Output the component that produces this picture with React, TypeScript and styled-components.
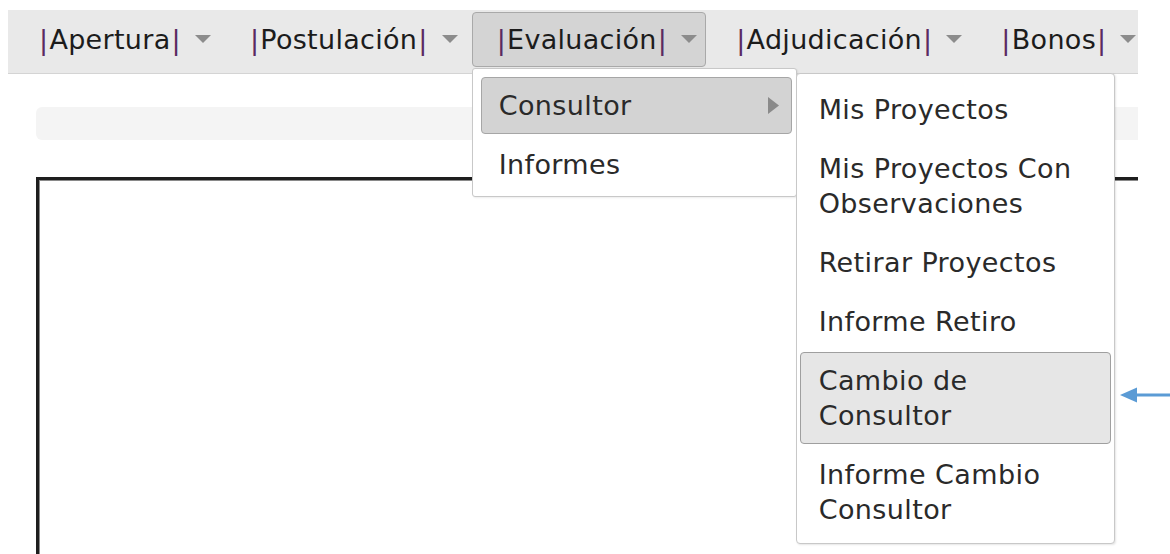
import React from "react";
import styled, { createGlobalStyle } from "styled-components";

const GlobalStyle = createGlobalStyle`
  html, body {
    margin: 0;
    padding: 0;
    background: #ffffff;
  }
  body {
    font-family: "DejaVu Sans", Verdana, "Liberation Sans", sans-serif;
  }
`;

const Page = styled.div`
  position: relative;
  width: 1170px;
  height: 554px;
  overflow: hidden;
  padding: 10px 0 0 8px;
  box-sizing: border-box;
`;

const Shell = styled.div`
  width: 1130px;
  display: flex;
  flex-direction: column;
`;

const MenuBar = styled.nav`
  display: flex;
  align-items: flex-start;
  gap: 5px;
  height: 61px;
  padding: 2px 0 0 6px;
  box-sizing: content-box;
  background: #e9e9e9;
  border-bottom: 1px solid #d4d4d4;
  position: relative;
  z-index: 2;
  overflow: visible;
`;

const Tab = styled.div<{ $open?: boolean }>`
  position: relative;
  display: flex;
  align-items: center;
  gap: 13px;
  height: 55px;
  box-sizing: border-box;
  padding: 0 8px 0 23px;
  border: 1px solid ${(p) => (p.$open ? "#a9a9a9" : "transparent")};
  border-radius: 4px;
  background: ${(p) => (p.$open ? "#d4d4d4" : "transparent")};
`;

const TabLabel = styled.span`
  font-size: 27px;
  line-height: 35px;
  letter-spacing: 0.3px;
  color: #1c1c1c;
  white-space: nowrap;
`;

const Pipe = styled.span`
  color: #5a2a62;
  padding: 0 1px;
`;

const Caret = styled.svg`
  display: block;
  width: 16px;
  height: 8px;
  margin-top: -2px;
  flex: none;
`;

const Dropdown = styled.ul`
  position: absolute;
  top: calc(100% + 2px);
  left: -1px;
  width: 325px;
  box-sizing: border-box;
  margin: 0;
  padding: 8px 4px 3px 8px;
  list-style: none;
  display: flex;
  flex-direction: column;
  gap: 2px;
  background: #ffffff;
  border: 1px solid #c8c8c8;
  border-radius: 3px;
  box-shadow: 1px 1px 2px rgba(0, 0, 0, 0.08);
`;

const Submenu = styled.ul`
  position: absolute;
  top: 4px;
  left: 100%;
  width: 319px;
  box-sizing: border-box;
  margin: 0;
  padding: 7px 3px 5px 3px;
  list-style: none;
  display: flex;
  flex-direction: column;
  gap: 2px;
  background: #ffffff;
  border: 1px solid #c8c8c8;
  border-radius: 4px;
  box-shadow: 1px 1px 2px rgba(0, 0, 0, 0.1);
`;

const Item = styled.li<{ $state?: "active" | "hover"; $indent?: number }>`
  display: flex;
  align-items: center;
  justify-content: space-between;
  padding: 10px 12px 10px ${(p) => p.$indent ?? 18}px;
  border: 1px solid
    ${(p) =>
      p.$state === "active" ? "#a6a6a6" : p.$state === "hover" ? "#9f9f9f" : "transparent"};
  border-radius: 4px;
  background: ${(p) =>
    p.$state === "active" ? "#d3d3d3" : p.$state === "hover" ? "#e6e6e6" : "transparent"};
  font-size: 27px;
  line-height: 35px;
  letter-spacing: 0.4px;
  color: #2a2a2a;
`;

const SubArrow = styled.svg`
  display: block;
  width: 11px;
  height: 17px;
  flex: none;
`;

const Content = styled.div`
  width: 1130px;
  overflow: hidden;
  padding-left: 28px;
  box-sizing: border-box;
`;

const Breadcrumb = styled.div`
  margin-top: 33px;
  width: 1140px;
  height: 33px;
  background: #f4f4f4;
  border-radius: 6px;
`;

const Panel = styled.div`
  margin-top: 37px;
  width: 1140px;
  height: 420px;
  border: 3px solid #1e1e1e;
  box-shadow: inset 1px 1px 0 #8a8a8a;
`;

const Pointer = styled.svg`
  position: absolute;
  left: 1120px;
  top: 386px;
  width: 50px;
  height: 18px;
`;

const DownCaret = () => (
  <Caret viewBox="0 0 16 8">
    <polygon points="0,0 16,0 8,8" fill="#8c8c8c" />
  </Caret>
);

const Label = ({ text }: { text: string }) => (
  <TabLabel>
    <Pipe>|</Pipe>
    {text}
    <Pipe>|</Pipe>
  </TabLabel>
);

const consultorItems: { label: React.ReactNode; hover?: boolean }[] = [
  { label: "Mis Proyectos" },
  {
    label: (
      <>
        Mis Proyectos Con
        <br />
        Observaciones
      </>
    ),
  },
  { label: "Retirar Proyectos" },
  { label: "Informe Retiro" },
  {
    label: (
      <>
        Cambio de
        <br />
        Consultor
      </>
    ),
    hover: true,
  },
  {
    label: (
      <>
        Informe Cambio
        <br />
        Consultor
      </>
    ),
  },
];

export default function App() {
  return (
    <>
      <GlobalStyle />
      <Page>
        <Shell>
          <MenuBar>
            <Tab>
              <Label text="Apertura" />
              <DownCaret />
            </Tab>
            <Tab>
              <Label text="Postulación" />
              <DownCaret />
            </Tab>
            <Tab $open>
              <Label text="Evaluación" />
              <DownCaret />
              <Dropdown>
                <Item $state="active" $indent={17}>
                  <span>Consultor</span>
                  <SubArrow viewBox="0 0 11 17">
                    <polygon points="0,0 11,8.5 0,17" fill="#8a8a8a" />
                  </SubArrow>
                </Item>
                <Item $indent={17}>Informes</Item>
                <Submenu>
                  {consultorItems.map((it, i) => (
                    <Item key={i} $state={it.hover ? "hover" : undefined}>
                      <span>{it.label}</span>
                    </Item>
                  ))}
                </Submenu>
              </Dropdown>
            </Tab>
            <Tab>
              <Label text="Adjudicación" />
              <DownCaret />
            </Tab>
            <Tab>
              <Label text="Bonos" />
              <DownCaret />
            </Tab>
          </MenuBar>
          <Content>
            <Breadcrumb />
            <Panel />
          </Content>
        </Shell>
        <Pointer viewBox="0 0 50 18">
          <polygon points="0,9 17,1.5 17,16.5" fill="#5b9bd5" />
          <rect x="16" y="7.5" width="34" height="3" fill="#5b9bd5" />
        </Pointer>
      </Page>
    </>
  );
}
